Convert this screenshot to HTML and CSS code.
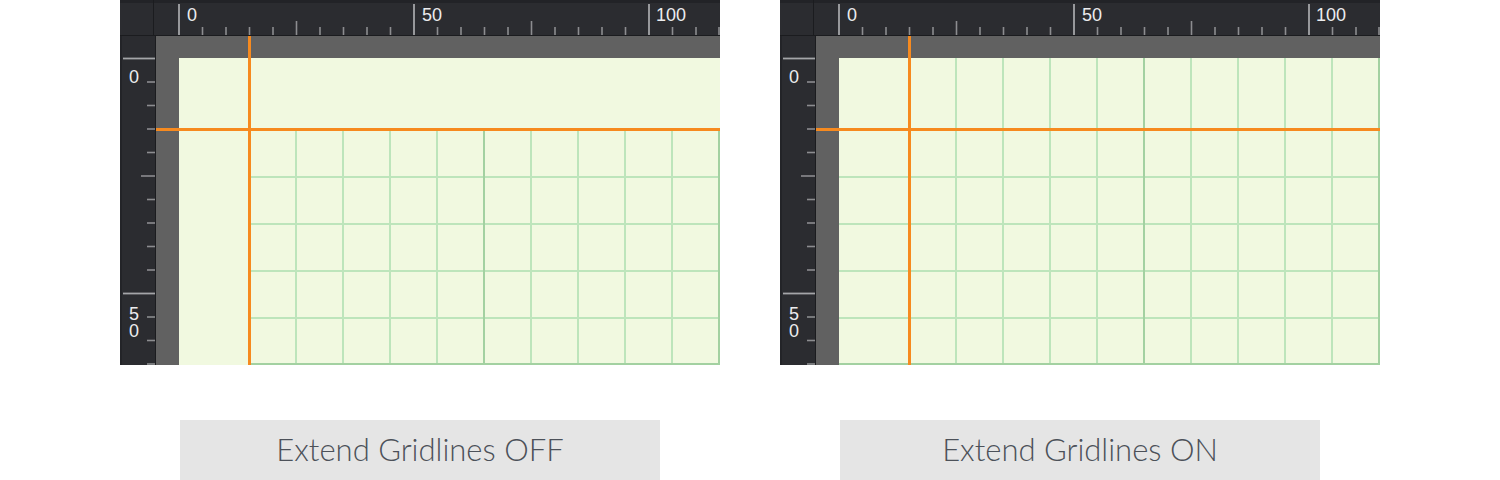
FILE: index.html
```html
<!DOCTYPE html>
<html>
<head>
<meta charset="utf-8">
<link rel="stylesheet" href="styles.css">
</head>
<body>
<div class="wrap">
  <section class="col">
    <div class="panel">
      <div class="toprow">
        <div class="corner"></div>
        <svg class="hruler" width="566" height="35" viewBox="0 0 566 35">
          <g class="tk">
            <line x1="48.5" y1="27" x2="48.5" y2="35"/><line x1="72" y1="27" x2="72" y2="35"/><line x1="95.5" y1="27" x2="95.5" y2="35"/><line x1="119" y1="27" x2="119" y2="35"/>
            <line x1="142.5" y1="21" x2="142.5" y2="35"/>
            <line x1="166" y1="27" x2="166" y2="35"/><line x1="189.5" y1="27" x2="189.5" y2="35"/><line x1="213" y1="27" x2="213" y2="35"/><line x1="236.5" y1="27" x2="236.5" y2="35"/>
            <line x1="283.5" y1="27" x2="283.5" y2="35"/><line x1="307" y1="27" x2="307" y2="35"/><line x1="330.5" y1="27" x2="330.5" y2="35"/><line x1="354" y1="27" x2="354" y2="35"/>
            <line x1="377.5" y1="21" x2="377.5" y2="35"/>
            <line x1="401" y1="27" x2="401" y2="35"/><line x1="424.5" y1="27" x2="424.5" y2="35"/><line x1="448" y1="27" x2="448" y2="35"/><line x1="471.5" y1="27" x2="471.5" y2="35"/>
            <line x1="518.5" y1="27" x2="518.5" y2="35"/><line x1="542" y1="27" x2="542" y2="35"/><line x1="565" y1="27" x2="565" y2="35"/>
          </g>
          <g class="mj">
            <line x1="25" y1="4" x2="25" y2="35"/><line x1="260" y1="4" x2="260" y2="35"/><line x1="495" y1="4" x2="495" y2="35"/>
          </g>
          <text class="num" x="33" y="21">0</text>
          <text class="num" x="268" y="21">50</text>
          <text class="num" x="502" y="21">100</text>
        </svg>
      </div>
      <div class="mainrow">
        <svg class="vruler" width="35" height="329" viewBox="0 0 35 329">
          <g class="tk">
            <line x1="27" y1="46" x2="35" y2="46"/><line x1="27" y1="69.5" x2="35" y2="69.5"/><line x1="27" y1="93" x2="35" y2="93"/><line x1="27" y1="116.5" x2="35" y2="116.5"/>
            <line x1="21" y1="140" x2="35" y2="140"/>
            <line x1="27" y1="163.5" x2="35" y2="163.5"/><line x1="27" y1="187" x2="35" y2="187"/><line x1="27" y1="210.5" x2="35" y2="210.5"/><line x1="27" y1="234" x2="35" y2="234"/>
            <line x1="27" y1="281" x2="35" y2="281"/><line x1="27" y1="304.5" x2="35" y2="304.5"/><line x1="27" y1="328" x2="35" y2="328"/>
          </g>
          <g class="mj">
            <line x1="3" y1="22.5" x2="35" y2="22.5"/><line x1="3" y1="257.5" x2="35" y2="257.5"/>
          </g>
          <text class="num" x="9" y="47">0</text>
          <text class="num" x="9" y="284">5</text>
          <text class="num" x="9" y="301">0</text>
        </svg>
        <div class="stage">
          <div class="canvas">
            <svg width="541" height="307" viewBox="0 0 541 307">
              <g class="gl">
                <rect x="70" y="118" width="471" height="2"/><rect x="70" y="165" width="471" height="2"/><rect x="70" y="212" width="471" height="2"/><rect x="70" y="259" width="471" height="2"/>
                <rect x="116" y="72" width="2" height="235"/><rect x="163" y="72" width="2" height="235"/><rect x="210" y="72" width="2" height="235"/><rect x="257" y="72" width="2" height="235"/>
                <rect x="351" y="72" width="2" height="235"/><rect x="398" y="72" width="2" height="235"/><rect x="445" y="72" width="2" height="235"/><rect x="492" y="72" width="2" height="235"/>
              </g>
              <g class="gd">
                <rect x="304" y="72" width="2" height="235"/><rect x="539" y="72" width="2" height="235"/><rect x="70" y="305" width="471" height="2"/>
              </g>
            </svg>
          </div>
          <div class="guide guide-v"></div>
          <div class="guide guide-h"></div>
        </div>
      </div>
    </div>
    <div class="label">Extend Gridlines OFF</div>
  </section>

  <section class="col">
    <div class="panel">
      <div class="toprow">
        <div class="corner"></div>
        <svg class="hruler" width="566" height="35" viewBox="0 0 566 35">
          <g class="tk">
            <line x1="48.5" y1="27" x2="48.5" y2="35"/><line x1="72" y1="27" x2="72" y2="35"/><line x1="95.5" y1="27" x2="95.5" y2="35"/><line x1="119" y1="27" x2="119" y2="35"/>
            <line x1="142.5" y1="21" x2="142.5" y2="35"/>
            <line x1="166" y1="27" x2="166" y2="35"/><line x1="189.5" y1="27" x2="189.5" y2="35"/><line x1="213" y1="27" x2="213" y2="35"/><line x1="236.5" y1="27" x2="236.5" y2="35"/>
            <line x1="283.5" y1="27" x2="283.5" y2="35"/><line x1="307" y1="27" x2="307" y2="35"/><line x1="330.5" y1="27" x2="330.5" y2="35"/><line x1="354" y1="27" x2="354" y2="35"/>
            <line x1="377.5" y1="21" x2="377.5" y2="35"/>
            <line x1="401" y1="27" x2="401" y2="35"/><line x1="424.5" y1="27" x2="424.5" y2="35"/><line x1="448" y1="27" x2="448" y2="35"/><line x1="471.5" y1="27" x2="471.5" y2="35"/>
            <line x1="518.5" y1="27" x2="518.5" y2="35"/><line x1="542" y1="27" x2="542" y2="35"/><line x1="565" y1="27" x2="565" y2="35"/>
          </g>
          <g class="mj">
            <line x1="25" y1="4" x2="25" y2="35"/><line x1="260" y1="4" x2="260" y2="35"/><line x1="495" y1="4" x2="495" y2="35"/>
          </g>
          <text class="num" x="33" y="21">0</text>
          <text class="num" x="268" y="21">50</text>
          <text class="num" x="502" y="21">100</text>
        </svg>
      </div>
      <div class="mainrow">
        <svg class="vruler" width="35" height="329" viewBox="0 0 35 329">
          <g class="tk">
            <line x1="27" y1="46" x2="35" y2="46"/><line x1="27" y1="69.5" x2="35" y2="69.5"/><line x1="27" y1="93" x2="35" y2="93"/><line x1="27" y1="116.5" x2="35" y2="116.5"/>
            <line x1="21" y1="140" x2="35" y2="140"/>
            <line x1="27" y1="163.5" x2="35" y2="163.5"/><line x1="27" y1="187" x2="35" y2="187"/><line x1="27" y1="210.5" x2="35" y2="210.5"/><line x1="27" y1="234" x2="35" y2="234"/>
            <line x1="27" y1="281" x2="35" y2="281"/><line x1="27" y1="304.5" x2="35" y2="304.5"/><line x1="27" y1="328" x2="35" y2="328"/>
          </g>
          <g class="mj">
            <line x1="3" y1="22.5" x2="35" y2="22.5"/><line x1="3" y1="257.5" x2="35" y2="257.5"/>
          </g>
          <text class="num" x="9" y="47">0</text>
          <text class="num" x="9" y="284">5</text>
          <text class="num" x="9" y="301">0</text>
        </svg>
        <div class="stage">
          <div class="canvas">
            <svg width="541" height="307" viewBox="0 0 541 307">
              <g class="gl">
                <rect x="0" y="118" width="541" height="2"/><rect x="0" y="165" width="541" height="2"/><rect x="0" y="212" width="541" height="2"/><rect x="0" y="259" width="541" height="2"/>
                <rect x="116" y="0" width="2" height="307"/><rect x="163" y="0" width="2" height="307"/><rect x="210" y="0" width="2" height="307"/><rect x="257" y="0" width="2" height="307"/>
                <rect x="351" y="0" width="2" height="307"/><rect x="398" y="0" width="2" height="307"/><rect x="445" y="0" width="2" height="307"/><rect x="492" y="0" width="2" height="307"/>
              </g>
              <g class="gd">
                <rect x="304" y="0" width="2" height="307"/><rect x="539" y="0" width="2" height="307"/><rect x="0" y="305" width="541" height="2"/>
              </g>
            </svg>
          </div>
          <div class="guide guide-v"></div>
          <div class="guide guide-h"></div>
        </div>
      </div>
    </div>
    <div class="label">Extend Gridlines ON</div>
  </section>
</div>
</body>
</html>
```

FILE: styles.css
```css
html, body {
  margin: 0;
  padding: 0;
  background: #ffffff;
}

.wrap {
  display: flex;
  gap: 60px;
  padding-left: 120px;
}

.col {
  width: 600px;
  display: flex;
  flex-direction: column;
}

.panel {
  width: 600px;
  height: 365px;
  display: flex;
  flex-direction: column;
  background: #2b2c30;
}

.toprow {
  display: flex;
  height: 35px;
  border-bottom: 1px solid #1b1c1f;
  background: linear-gradient(#222327 0 3px, #2b2c30 3px);
}

.corner {
  width: 33px;
  border-right: 1px solid #1b1c1f;
}

.hruler, .vruler {
  display: block;
}

.tk line {
  stroke: #8c8d90;
  stroke-width: 1.6;
}

.mj line {
  stroke: #a4a5a8;
  stroke-width: 1.8;
}

.num {
  font-family: "Liberation Sans", Arial, sans-serif;
  font-size: 18px;
  fill: #ececee;
}

.mainrow {
  display: flex;
  height: 329px;
}

.vruler {
  border-right: 1px solid #1b1c1f;
  background: linear-gradient(90deg, #232428 0 2px, #2b2c30 2px);
}

.stage {
  position: relative;
  width: 564px;
  height: 329px;
  box-sizing: border-box;
  padding: 22px 0 0 23px;
  background: #616161;
}

.canvas {
  width: 541px;
  height: 307px;
  background: #f1f9e0;
}

.canvas svg {
  display: block;
}

.gl rect {
  fill: #bde5bb;
}

.gd rect {
  fill: #a3d1a1;
}

.guide {
  position: absolute;
  background: #f68a1f;
}

.guide-v {
  left: 92px;
  top: 0;
  bottom: 0;
  width: 3px;
}

.guide-h {
  top: 92px;
  left: 0;
  right: 0;
  height: 3px;
}

.label {
  width: 480px;
  height: 60px;
  margin: 55px auto 0;
  background: #e5e5e5;
  color: #4c5159;
  font-family: Lato, "Open Sans", sans-serif;
  font-weight: 300;
  font-size: 31px;
  line-height: 58px;
  text-align: center;
}
```
